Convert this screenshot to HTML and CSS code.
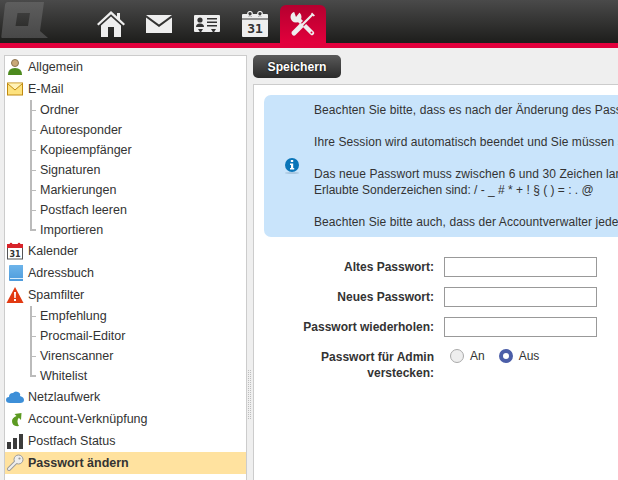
FILE: index.html
```html
<!DOCTYPE html>
<html lang="de">
<head>
<meta charset="utf-8">
<title>Passwort ändern</title>
<link rel="stylesheet" href="styles.css">
</head>
<body>
<header class="topbar">
  <svg class="logo" viewBox="0 0 48 40"><defs><linearGradient id="lg" x1="0" y1="0" x2="0" y2="1"><stop offset="0" stop-color="#5e5e5e"/><stop offset="1" stop-color="#484848"/></linearGradient></defs><path fill="url(#lg)" fill-rule="evenodd" d="M8 2H44L40 31L48 38H2Q1 38 1.500 35L5 5Q5.500 2 8 2ZM17.500 13L15.500 26H28L30 13Z"/></svg>
  <nav class="tabs">
    <a class="tab"><svg width="28" height="26" viewBox="0 0 28 26"><path fill="#eee" d="M14 0L20 5.500V2H23V8.300L28 13L26.500 14.500L14 3.300L1.500 14.500L0 13Z"/><path fill="#eee" d="M14 5.500L24 14.500V26H17V16H11V26H4V14.500Z"/></svg></a>
    <a class="tab"><svg width="26" height="18" viewBox="0 0 26 18"><path fill="#eee" d="M0 0H26L13 9.500Z"/><path fill="#eee" d="M0 2.500L13 12L26 2.500V18H0Z"/></svg></a>
    <a class="tab"><svg width="26" height="19" viewBox="0 0 26 19"><path fill="#eee" d="M1 0H25Q26 0 26 1V16Q26 17 25 17H1Q0 17 0 16V1Q0 0 1 0Z"/><circle cx="6" cy="5" r="2.600" fill="#333"/><path fill="#333" d="M2 12Q2 8.500 6 8.500T10 12ZM13 3H23V4.500H13ZM13 6.500H23V8H13ZM13 10H23V11.500H13ZM4 14H9L6.500 18ZM17 14H22L19.500 18Z"/></svg></a>
    <a class="tab"><svg width="26" height="26" viewBox="0 0 26 26"><path fill="#eee" d="M1 3H6.500V5.500H10V3H16V5.500H19.500V3H25Q26 3 26 4V25Q26 26 25 26H1Q0 26 0 25V4Q0 3 1 3Z"/><circle cx="8" cy="2.800" r="2.300" fill="none" stroke="#eee" stroke-width="1.200"/><circle cx="18" cy="2.800" r="2.300" fill="none" stroke="#eee" stroke-width="1.200"/><rect y="7.500" width="26" height="1" fill="#333"/><text x="13" y="22" class="caltext" text-anchor="middle">31</text></svg></a>
    <a class="tab tab-active"><svg width="26" height="26" viewBox="0 0 26 26"><path d="M6 6L22 22" stroke="#eee" stroke-width="4.500" stroke-linecap="round"/><circle cx="6" cy="6" r="5.500" fill="#eee"/><path d="M6 6L3.500 -1H11.500Z" fill="#bb0030"/><circle cx="21.500" cy="21.500" r="1" fill="#dc003a"/><path d="M22 4L12 14" stroke="#ca0034" stroke-width="4.500"/><path d="M22.500 3.500L12 14" stroke="#eee" stroke-width="2.200"/><path d="M22 1.500L25 4.500L23.500 5.500L21 3Z" fill="#eee"/><path d="M11 15L4 22" stroke="#d60038" stroke-width="7.500"/><path d="M11 15L4 22" stroke="#eee" stroke-width="5" stroke-linecap="round"/></svg></a>
  </nav>
</header>
<div class="redline"></div>

<div class="layout">
  <aside class="sidebar">
    <div class="item"><svg class="ico" viewBox="0 0 18 18"><circle cx="9" cy="5" r="3.500" fill="#c9a877" stroke="#8a7350"/><path fill="#4c8a1e" d="M2 17Q2 10 9 10T16 17Z"/></svg>Allgemein</div>
    <div class="item"><svg class="ico" viewBox="0 0 18 18"><rect x="1.500" y="3" width="15" height="12" fill="#fde27e" stroke="#c08a10"/><path d="M1.500 3.500L9 10L16.500 3.500" fill="#fff2b8" stroke="#c08a10"/></svg>E-Mail</div>
    <ul class="sub">
      <li>Ordner</li><li>Autoresponder</li><li>Kopieempfänger</li><li>Signaturen</li><li>Markierungen</li><li>Postfach leeren</li><li>Importieren</li>
    </ul>
    <div class="item"><svg class="ico" viewBox="0 0 18 18"><rect x="1.500" y="3" width="15" height="14" fill="#fff" stroke="#555"/><rect x="1" y="2" width="16" height="4" fill="#d8232a"/><circle cx="5" cy="2" r="1.300" fill="#d8232a"/><circle cx="13" cy="2" r="1.300" fill="#d8232a"/><text x="9" y="15" class="calsmall" text-anchor="middle">31</text></svg>Kalender</div>
    <div class="item"><svg class="ico" viewBox="0 0 18 18"><defs><linearGradient id="bk" x1="0" y1="0" x2="0" y2="1"><stop offset="0" stop-color="#6db4ea"/><stop offset="1" stop-color="#4d9bdc"/></linearGradient></defs><path fill="url(#bk)" d="M4 1H17V17H4Q3 17 3 16V2Q3 1 4 1Z"/><path fill="#d8ecfb" d="M4 14H17V15H4Z"/></svg>Adressbuch</div>
    <div class="item"><svg class="ico" viewBox="0 0 18 18"><path fill="#e23a12" d="M9 1L17.500 17H0.500Z"/><path fill="#fff" d="M8 6H10L9.700 12H8.300ZM8 13H10V15H8Z"/></svg>Spamfilter</div>
    <ul class="sub">
      <li>Empfehlung</li><li>Procmail-Editor</li><li>Virenscanner</li><li>Whitelist</li>
    </ul>
    <div class="item"><svg class="ico" viewBox="0 0 18 18"><path fill="#3d8fd8" d="M4 15Q0 15 0 12T3 9Q3 5 7 5 9 2.500 12 4T14 8Q18 9 18 12T14 15Z"/></svg>Netzlaufwerk</div>
    <div class="item"><svg class="ico" viewBox="0 0 18 18"><path fill="#5c9a22" d="M8.500 4L15.500 3L15 10L12.800 7.800Q10 11 13 16Q6 17 6 11Q6 8 10.500 6Z"/></svg>Account-Verknüpfung</div>
    <div class="item"><svg class="ico" viewBox="0 0 18 18"><rect x="1" y="10" width="4" height="7" fill="#3c3c3c"/><rect x="7" y="6" width="4" height="11" fill="#3c3c3c"/><rect x="13" y="2" width="4" height="15" fill="#3c3c3c"/></svg>Postfach Status</div>
    <div class="item item-active"><svg class="ico" viewBox="0 0 18 18"><path d="M3 15L10 8" stroke="#999" stroke-width="4" stroke-linecap="round"/><circle cx="12.500" cy="5.500" r="4.500" fill="#eee" stroke="#999"/><path d="M3 15L10 8" stroke="#eee" stroke-width="2.200" stroke-linecap="round"/><circle cx="13.500" cy="4.500" r="1.100" fill="#999"/></svg>Passwort ändern</div>
  </aside>

  <div class="gutter"><div class="grip"></div></div>

  <main class="main">
    <button class="save" type="button">Speichern</button>
    <section class="panel">
      <div class="info">
        <svg class="info-ico" viewBox="0 0 16 18"><ellipse cx="8" cy="16" rx="7" ry="1" fill="#a9c6de"/><circle cx="8" cy="8" r="7" fill="#0a75b8"/><path fill="#fff" d="M6.800 3H9.200V5H6.800ZM6 6.500H9.200V11H10.200V12.500H6V11H7V8H6Z"/></svg>
        <div class="info-text">
          <p class="wide">Beachten Sie bitte, dass es nach der Änderung des Passworts einige Minuten dauern kann.</p>
          <p class="wide">Ihre Session wird automatisch beendet und Sie müssen sich neu anmelden.</p>
          <p><span class="wide">Das neue Passwort muss zwischen 6 und 30 Zeichen lang sein.</span><br>Erlaubte Sonderzeichen sind: / - _ # * + ! § ( ) = : . @</p>
          <p class="wide">Beachten Sie bitte auch, dass der Accountverwalter jederzeit ein neues Passwort setzen kann.</p>
        </div>
      </div>
      <form class="form">
        <label class="lbl">Altes Passwort:</label><input class="field" type="password">
        <label class="lbl">Neues Passwort:</label><input class="field" type="password">
        <label class="lbl">Passwort wiederholen:</label><input class="field" type="password">
        <label class="lbl lbl-top">Passwort für Admin verstecken:</label>
        <div class="radios">
          <input class="radio" type="radio" name="hide"><span class="radio-text">An</span>
          <input class="radio" type="radio" name="hide" checked><span class="radio-text">Aus</span>
        </div>
      </form>
    </section>
  </main>
</div>
</body>
</html>
```
FILE: styles.css
```css
html, body {
  margin: 0;
  height: 480px;
  overflow: hidden;
  background: #efefef;
  font-family: "Liberation Sans", Arial, sans-serif;
  font-size: 12px;
  color: #333;
}
.topbar {
  display: flex;
  height: 43px;
  background: linear-gradient(#4a4a4a, #1d1d1b);
}
.logo { width: 48px; height: 40px; flex: none; }
.tabs { display: flex; gap: 2px; margin-left: 40px; padding-top: 5px; }
.tab {
  width: 46px;
  height: 38px;
  display: flex;
  align-items: center;
  justify-content: center;
  border-radius: 6px 6px 0 0;
}
.tab-active { background: linear-gradient(#b5002f, #e2003c); }
.caltext { font: bold 13px "DejaVu Sans Mono", monospace; fill: #333; }
.calsmall { font: bold 8px "DejaVu Sans", sans-serif; fill: #333; }
.redline { height: 5px; background: #e2003c; }
.layout { display: flex; padding: 7px 0 0 4px; }
.sidebar {
  flex: none;
  width: 241px;
  height: 440px;
  border: 1px solid #ccc;
  background: #fff;
  font-size: 12.500px;
}
.item {
  display: flex;
  align-items: center;
  height: 22px;
  gap: 4px;
  padding-left: 1px;
}
.item-active { background: #ffe29f; font-weight: bold; }
.ico { width: 18px; height: 18px; flex: none; }
.sub { list-style: none; margin: 0 0 0 25px; padding: 0; }
.sub li {
  height: 20px;
  line-height: 20px;
  padding-left: 10px;
  background:
    linear-gradient(#bbb, #bbb) 0 0 / 2px 100% no-repeat,
    linear-gradient(#bbb, #bbb) 0 50% / 6px 1px no-repeat;
}
.sub li:last-child {
  background:
    linear-gradient(#bbb, #bbb) 0 0 / 2px 50% no-repeat,
    linear-gradient(#bbb, #bbb) 0 50% / 6px 2px no-repeat;
}
.gutter { flex: none; width: 6px; display: flex; }
.grip {
  width: 3px;
  height: 50px;
  margin: 315px 0 0 1px;
  background:
    linear-gradient(#bdbdbd 50%, transparent 50%) 0 0 / 1px 2px repeat-y,
    linear-gradient(#bdbdbd 50%, transparent 50%) 2px 0 / 1px 2px repeat-y;
}
.main { flex: none; width: 500px; }
.save {
  display: block;
  width: 88px;
  height: 23px;
  padding: 0;
  border: 0;
  border-radius: 5px;
  background: linear-gradient(#5a5a5a, #2a2a2a);
  color: #fff;
  font: bold 12.200px "Liberation Sans", Arial, sans-serif;
  text-shadow: 0 0 2px #000;
}
.panel {
  margin-top: 6px;
  height: 400px;
  padding: 10px;
  border: 1px solid #ccc;
  background: #fff;
}
.info {
  display: flex;
  align-items: center;
  width: 480px;
  padding: 7px 0;
  border-radius: 7px;
  background: #c9e4fb;
  overflow: hidden;
  box-sizing: border-box;
}
.info-ico { width: 16px; height: 18px; flex: none; margin: 0 14px 0 20px; }
.info-text { white-space: nowrap; line-height: 16px; }
.info-text p { margin: 0 0 16px; }
.info-text p:last-child { margin: 0; }
.wide { letter-spacing: 0.08px; }
.form {
  display: grid;
  grid-template-columns: 170px 153px;
  column-gap: 10px;
  row-gap: 10px;
  align-items: center;
  margin-top: 20px;
}
.lbl { text-align: right; font-weight: bold; line-height: 16px; }
.lbl-top { align-self: start; margin-top: 2px; }
.field {
  box-sizing: border-box;
  width: 153px;
  height: 20px;
  margin: 0;
  border: 1px solid #999;
  background: #fff;
}
.radios { display: flex; align-items: center; align-self: start; margin-left: 6px; height: 16px; padding-top: 1px; }
.radio {
  appearance: none;
  box-sizing: border-box;
  width: 14px;
  height: 14px;
  margin: 0;
  border: 1px solid #aaa;
  border-radius: 50%;
  background: #eee;
}
.radio:checked { border: 4px solid #4b5ea8; background: #fff; }
.radio-text { margin: 0 14px 0 6px; }
```
